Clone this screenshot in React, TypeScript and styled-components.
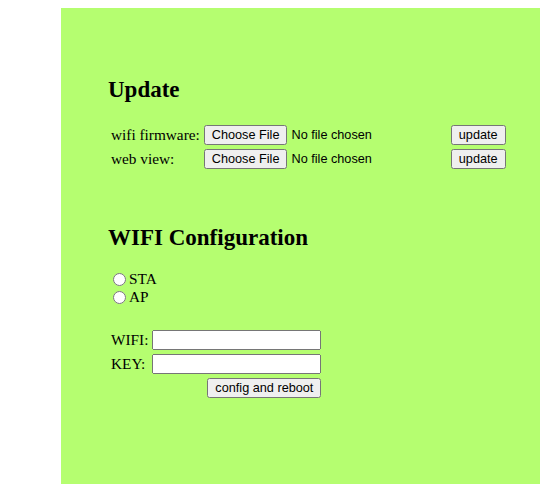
import React from "react";
import styled, { createGlobalStyle } from "styled-components";

const Global = createGlobalStyle`
  body {
    margin: 8px 0 0 8px;
    background: #ffffff;
    font-family: "Liberation Serif", "Times New Roman", serif;
    font-size: 15.3px;
    color: #000;
  }
  input, button {
    font-family: "Liberation Sans", Arial, sans-serif;
    font-size: 12.7px;
  }
`;

const Panel = styled.div`
  margin-left: 53px;
  height: 476px;
  box-sizing: border-box;
  padding: 50px 0 0 47px;
  background: #b5fe70;
`;

const Heading = styled.h2`
  font-size: 23px;
  font-weight: bold;
  margin: 19px 0;
`;

const FormTable = styled.table`
  border-spacing: 2px;
  td {
    padding: 1px;
  }
`;

const ActionCell = styled.td<{ $right?: boolean }>`
  text-align: ${(p) => (p.$right ? "right" : "left")};
`;

const FileInput = styled.input.attrs({ type: "file" })`
  width: 243px;
`;

const TextInput = styled.input.attrs({ type: "text" })`
  width: 161px;
  box-sizing: content-box;
`;

const Spacer = styled.div<{ $h: number }>`
  height: ${(p) => p.$h}px;
`;

const RadioLine = styled.label`
  display: block;
  line-height: 18px;
  height: 18px;
`;

const Radio = styled.input.attrs({ type: "radio", name: "mode" })`
  width: 13px;
  height: 13px;
  margin: 0 3px 0 5px;
  vertical-align: -2px;
`;

export default function App() {
  return (
    <>
      <Global />
      <Panel>
        <Heading>Update</Heading>
        <FormTable>
          <tbody>
            <tr>
              <td>wifi firmware:</td>
              <td>
                <FileInput />
              </td>
              <ActionCell>
                <input type="submit" value="update" />
              </ActionCell>
            </tr>
            <tr>
              <td>web view:</td>
              <td>
                <FileInput />
              </td>
              <ActionCell>
                <input type="submit" value="update" />
              </ActionCell>
            </tr>
          </tbody>
        </FormTable>
        <Spacer $h={34} />
        <Heading>WIFI Configuration</Heading>
        <RadioLine>
          <Radio />
          STA
        </RadioLine>
        <RadioLine>
          <Radio />
          AP
        </RadioLine>
        <Spacer $h={21} />
        <FormTable>
          <tbody>
            <tr>
              <td>WIFI:</td>
              <td>
                <TextInput />
              </td>
            </tr>
            <tr>
              <td>KEY:</td>
              <td>
                <TextInput />
              </td>
            </tr>
            <tr>
              <td></td>
              <ActionCell $right>
                <input type="submit" value="config and reboot" />
              </ActionCell>
            </tr>
          </tbody>
        </FormTable>
      </Panel>
    </>
  );
}
